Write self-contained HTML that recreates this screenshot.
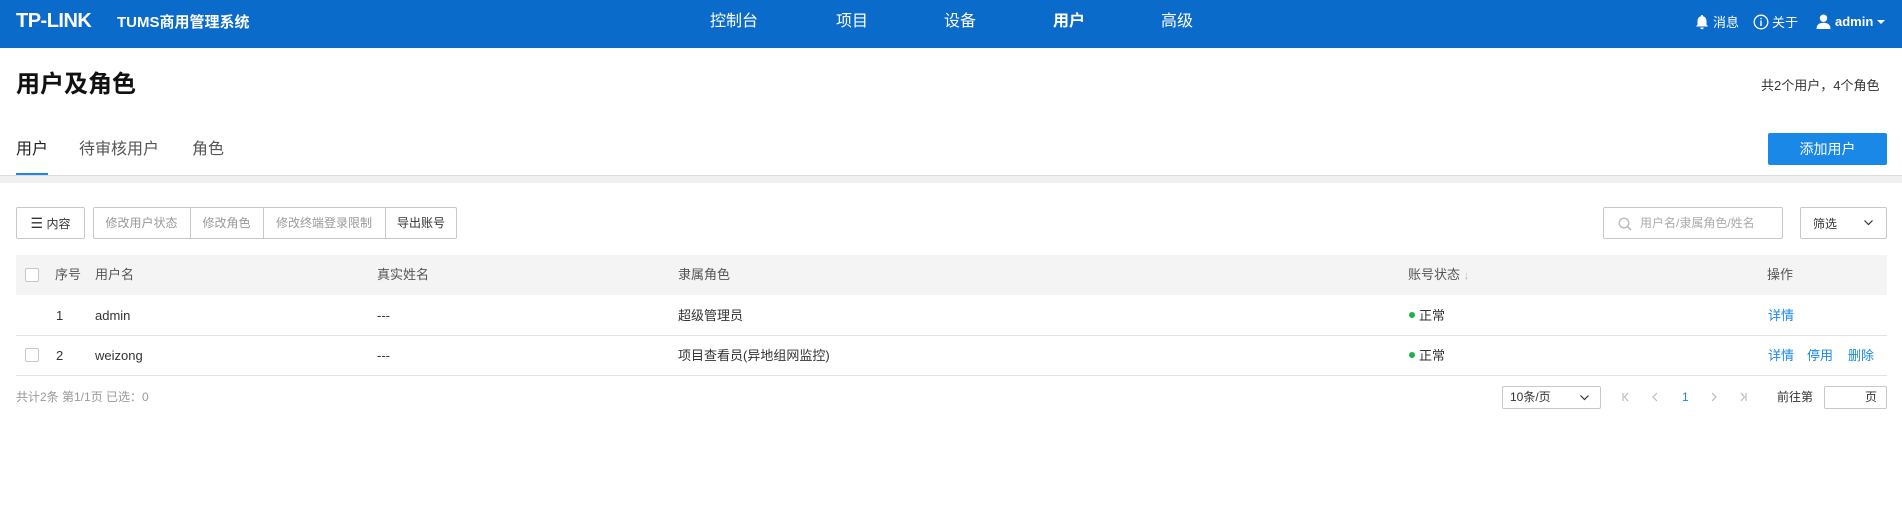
<!DOCTYPE html>
<html><head><meta charset="utf-8"><style>
*{margin:0;padding:0;box-sizing:border-box}
body{width:1902px;height:515px;background:#fff;font-family:"Liberation Sans","Noto Sans CJK SC",sans-serif;color:#333;position:relative;overflow:hidden;font-size:13px}
.a{position:absolute;white-space:nowrap;line-height:18px}
.hdr{position:absolute;left:0;top:0;width:1902px;height:48px;background:#0b6bca}
.w{color:#fff}
.nav{font-size:16px;top:11px;color:#fff;line-height:22px}
.btn{position:absolute;border:1px solid #c8c8c8;border-radius:2px;background:#fff}
.th{color:#555;font-size:13px}
.dot{display:inline-block;width:6px;height:6px;border-radius:50%;background:#1fb14d;margin-right:4px;vertical-align:2px}
.lk{color:#1a88e6}
.cb{position:absolute;width:14px;height:14px;border:1px solid #c8c8c8;border-radius:2px;background:#fff}
.line{position:absolute;left:16px;width:1871px;height:1px;background:#e3e3e3}
</style></head><body>
<div class="hdr"></div>
<div class="a w" style="left:16px;top:10px;font-size:20px;font-weight:bold;letter-spacing:-0.5px;line-height:22px">TP-LINK</div>
<div class="a w" style="left:117px;top:14px;font-size:15px;font-weight:bold">TUMS商用管理系统</div>
<div class="a nav" style="left:710px">控制台</div>
<div class="a nav" style="left:836px">项目</div>
<div class="a nav" style="left:944px">设备</div>
<div class="a nav" style="left:1053px;font-weight:bold">用户</div>
<div class="a nav" style="left:1161px">高级</div>
<svg class="a" style="left:1695px;top:14px" width="14" height="16" viewBox="0 0 14 16"><path d="M7 1a1 1 0 0 1 1 1.2C10.3 2.7 11.5 4.6 11.5 7v3.5L13 12.5H1L2.5 10.5V7C2.5 4.6 3.7 2.7 6 2.2A1 1 0 0 1 7 1zM5.3 13.5h3.4A1.7 1.7 0 0 1 5.3 13.5z" fill="#fff"/></svg>
<div class="a w" style="left:1713px;top:14px;font-size:13px">消息</div>
<svg class="a" style="left:1753px;top:14px" width="16" height="16" viewBox="0 0 16 16"><circle cx="8" cy="8" r="6.8" fill="none" stroke="#fff" stroke-width="1.3"/><rect x="7.3" y="6.5" width="1.4" height="5.5" fill="#fff"/><rect x="7.3" y="3.8" width="1.4" height="1.5" fill="#fff"/></svg>
<div class="a w" style="left:1772px;top:14px;font-size:13px">关于</div>
<svg class="a" style="left:1816px;top:14px" width="15" height="15" viewBox="0 0 15 15"><circle cx="7.5" cy="4.2" r="3.7" fill="#fff"/><path d="M0.5 15C0.5 10.5 3.5 8.8 7.5 8.8S14.5 10.5 14.5 15z" fill="#fff"/></svg>
<div class="a w" style="left:1835px;top:13px;font-size:13px;font-weight:bold">admin</div>
<svg class="a" style="left:1877px;top:20px" width="8" height="5"><path d="M0 0h8L4 4z" fill="#fff"/></svg>

<div class="a" style="left:16px;top:70px;font-size:24px;font-weight:bold;color:#111;line-height:30px">用户及角色</div>
<div class="a" style="left:1761px;top:77px;font-size:13px;color:#333">共2个用户，4个角色</div>

<div class="a" style="left:16px;top:139px;font-size:16px;color:#222;line-height:22px">用户</div>
<div class="a" style="left:79px;top:139px;font-size:16px;color:#555;line-height:22px">待审核用户</div>
<div class="a" style="left:192px;top:139px;font-size:16px;color:#555;line-height:22px">角色</div>
<div class="a" style="left:16px;top:173px;width:32px;height:3px;background:#1a88e6"></div>
<div class="a" style="left:1768px;top:133px;width:119px;height:32px;background:#1a88e6;border-radius:2px;color:#fff;font-size:14px;text-align:center;line-height:32px">添加用户</div>
<div class="a" style="left:0;top:175px;width:1902px;height:1px;background:#dcdcdc"></div>
<div class="a" style="left:0;top:176px;width:1902px;height:7px;background:#f0f0f0"></div>

<div class="btn" style="left:16px;top:207px;width:69px;height:32px;line-height:30px;text-align:center;font-size:12px;color:#333"><span style="font-size:14px">☰</span> 内容</div>
<div class="btn" style="left:93px;top:207px;width:364px;height:32px"></div>
<div class="a" style="left:190px;top:207px;width:1px;height:32px;background:#c8c8c8"></div>
<div class="a" style="left:263px;top:207px;width:1px;height:32px;background:#c8c8c8"></div>
<div class="a" style="left:385px;top:207px;width:1px;height:32px;background:#c8c8c8"></div>
<div class="a" style="left:93px;top:214px;width:97px;text-align:center;font-size:12px;color:#999">修改用户状态</div>
<div class="a" style="left:190px;top:214px;width:73px;text-align:center;font-size:12px;color:#999">修改角色</div>
<div class="a" style="left:263px;top:214px;width:122px;text-align:center;font-size:12px;color:#999">修改终端登录限制</div>
<div class="a" style="left:385px;top:214px;width:72px;text-align:center;font-size:12px;color:#333">导出账号</div>

<div class="btn" style="left:1603px;top:207px;width:180px;height:32px"></div>
<svg class="a" style="left:1618px;top:217px" width="14" height="14" viewBox="0 0 14 14"><circle cx="6" cy="6" r="4.8" fill="none" stroke="#bbb" stroke-width="1.3"/><path d="M9.5 9.5L13 13" stroke="#bbb" stroke-width="1.4"/></svg>
<div class="a" style="left:1640px;top:214px;font-size:12px;color:#aaa">用户名/隶属角色/姓名</div>
<div class="btn" style="left:1800px;top:207px;width:87px;height:32px"></div>
<div class="a" style="left:1813px;top:215px;font-size:12px;color:#333">筛选</div>
<svg class="a" style="left:1864px;top:220px" width="9" height="6"><path d="M0.5 0.5L4.5 4.5L8.5 0.5" fill="none" stroke="#333" stroke-width="1.2"/></svg>

<div class="a" style="left:16px;top:255px;width:1871px;height:40px;background:#f4f4f4"></div>
<div class="cb" style="left:25px;top:268px"></div>
<div class="a th" style="left:55px;top:266px">序号</div>
<div class="a th" style="left:95px;top:266px">用户名</div>
<div class="a th" style="left:377px;top:266px">真实姓名</div>
<div class="a th" style="left:678px;top:266px">隶属角色</div>
<div class="a th" style="left:1408px;top:266px">账号状态 <span style="color:#bbb;font-size:11px">↓</span></div>
<div class="a th" style="left:1767px;top:266px">操作</div>

<div class="a" style="left:56px;top:307px">1</div>
<div class="a" style="left:95px;top:307px">admin</div>
<div class="a" style="left:377px;top:307px">---</div>
<div class="a" style="left:678px;top:307px">超级管理员</div>
<div class="a" style="left:1409px;top:307px"><span class="dot"></span>正常</div>
<div class="a lk" style="left:1768px;top:307px">详情</div>
<div class="line" style="top:335px"></div>

<div class="cb" style="left:25px;top:348px"></div>
<div class="a" style="left:56px;top:347px">2</div>
<div class="a" style="left:95px;top:347px">weizong</div>
<div class="a" style="left:377px;top:347px">---</div>
<div class="a" style="left:678px;top:347px">项目查看员(异地组网监控)</div>
<div class="a" style="left:1409px;top:347px"><span class="dot"></span>正常</div>
<div class="a lk" style="left:1768px;top:347px">详情</div>
<div class="a lk" style="left:1807px;top:347px">停用</div>
<div class="a lk" style="left:1848px;top:347px">删除</div>
<div class="line" style="top:375px"></div>

<div class="a" style="left:16px;top:388px;font-size:12px;color:#999">共计2条 第1/1页 已选：0</div>
<div class="btn" style="left:1502px;top:386px;width:99px;height:23px"></div>
<div class="a" style="left:1510px;top:388px;font-size:12px;color:#333">10条/页</div>
<svg class="a" style="left:1580px;top:395px" width="9" height="6"><path d="M0.5 0.5L4.5 4.5L8.5 0.5" fill="none" stroke="#333" stroke-width="1.2"/></svg>
<svg class="a" style="left:1622px;top:392px" width="140" height="10" viewBox="0 0 140 10"><g fill="none" stroke="#bbb" stroke-width="1.2"><path d="M1 1v8M6 1L2.5 5L6 9"/><path d="M35 1L31 5L35 9"/><path d="M90 1L94 5L90 9"/><path d="M119 1L122.5 5L119 9M124 1v8"/></g></svg>
<div class="a" style="left:1682px;top:388px;font-size:12px;color:#1a88e6">1</div>
<div class="a" style="left:1777px;top:388px;font-size:12px;color:#333">前往第</div>
<div class="btn" style="left:1824px;top:386px;width:63px;height:23px"></div>
<div class="a" style="left:1865px;top:388px;font-size:12px;color:#333">页</div>
</body></html>
